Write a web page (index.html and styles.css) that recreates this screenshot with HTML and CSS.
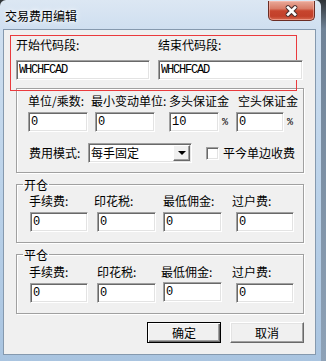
FILE: index.html
```html
<!DOCTYPE html>
<html lang="zh-CN">
<head>
    <meta charset="UTF-8">
    <title>交易费用编辑</title>
    <link rel="stylesheet" href="styles.css">
</head>
<body>

    <div class="window">
        <div class="titlebar">
            <span class="title">交易费用编辑</span>
            <button class="close-btn" aria-label="关闭">
                <svg width="13" height="12" viewBox="0 0 13 12">
                    <path d="M3 2.5 L10 9.5 M10 2.5 L3 9.5" stroke="#4a3030" stroke-width="4.6" stroke-linecap="round" fill="none"/>
                    <path d="M3 2.5 L10 9.5 M10 2.5 L3 9.5" stroke="#fff" stroke-width="2.6" stroke-linecap="square" fill="none"/>
                </svg>
            </button>
        </div>

        <div class="client">
            <div class="highlight"></div>

            <div class="code-row">
                <div class="code-col">
                    <span class="lbl">开始代码段:</span>
                    <input class="field code" type="text" value="WHCHFCAD">
                </div>
                <div class="code-col">
                    <span class="lbl">结束代码段:</span>
                    <input class="field code" type="text" value="WHCHFCAD">
                </div>
            </div>

            <div class="group params">
                <div class="param-labels">
                    <span>单位/乘数:</span>
                    <span>最小变动单位:</span>
                    <span>多头保证金</span>
                    <span>空头保证金</span>
                </div>
                <div class="param-inputs">
                    <input class="field w60" type="text" value="0">
                    <input class="field w60" type="text" value="0">
                    <input class="field w50" type="text" value="10">
                    <span class="pct">%</span>
                    <input class="field w48" type="text" value="0">
                    <span class="pct">%</span>
                </div>
                <div class="mode-row">
                    <span class="mode-lbl">费用模式:</span>
                    <div class="combo">
                        <span class="combo-text">每手固定</span>
                        <span class="combo-btn"><i class="arrow"></i></span>
                    </div>
                    <span class="check"></span>
                    <span class="check-lbl">平今单边收费</span>
                </div>
            </div>

            <fieldset class="group fee open">
                <legend>开仓</legend>
                <div class="fee-labels">
                    <span>手续费:</span>
                    <span>印花税:</span>
                    <span>最低佣金:</span>
                    <span>过户费:</span>
                </div>
                <div class="fee-inputs">
                    <input class="field" type="text" value="0">
                    <input class="field" type="text" value="0">
                    <input class="field" type="text" value="0">
                    <input class="field" type="text" value="0">
                </div>
            </fieldset>

            <fieldset class="group fee close">
                <legend>平仓</legend>
                <div class="fee-labels">
                    <span>手续费:</span>
                    <span>印花税:</span>
                    <span>最低佣金:</span>
                    <span>过户费:</span>
                </div>
                <div class="fee-inputs">
                    <input class="field" type="text" value="0">
                    <input class="field" type="text" value="0">
                    <input class="field lifted" type="text" value="0">
                    <input class="field" type="text" value="0">
                </div>
            </fieldset>

            <div class="actions">
                <button class="btn default">确定</button>
                <button class="btn">取消</button>
            </div>
        </div>
    </div>

</body>
</html>
```

FILE: styles.css
```css
/* Win7 style dialog */
body {
    margin: 0;
    width: 326px;
    height: 361px;
    overflow: hidden;
    background: linear-gradient(#2e3236 0%, #6f8296 8%, #8ea2b7 100%);
    font-family: "Noto Sans CJK SC", sans-serif;
    font-size: 12px;
    color: #000;
}

.window {
    width: 321px;
    height: 361px;
    box-sizing: border-box;
    padding: 0 5px 0 3px;
    background: linear-gradient(180deg, #dce7f3 0%, #cfdff0 8%, #bcd3ea 50%, #a9c4e0 100%);
    border-radius: 6px 6px 0 0;
}

/* Title bar */
.titlebar {
    display: flex;
    justify-content: space-between;
    align-items: flex-start;
    height: 29px;
    padding: 0 1px 0 2px;
}

.title {
    margin-top: 8px;
    line-height: 16px;
    text-shadow: 0 0 6px #fff, 0 0 3px #fff;
}

.close-btn {
    width: 47px;
    height: 20px;
    margin-top: 1px;
    padding: 0;
    display: flex;
    justify-content: center;
    align-items: center;
    border: 1px solid #6b2d24;
    border-top: none;
    border-radius: 0 0 5px 5px;
    background: linear-gradient(180deg, #e9aa9a 0%, #d97c68 40%, #c7452e 52%, #c2402a 80%, #d7694f 100%);
    box-shadow: inset 0 0 0 1px rgba(255, 200, 190, 0.5);
}

/* Client area */
.client {
    position: relative;
    width: 313px;
    height: 326px;
    box-sizing: border-box;
    border: 1px solid #8599ae;
    background: #f0f0f0;
    padding: 8px 11px 0 12px;
}

.highlight {
    position: absolute;
    left: 6px;
    top: 5px;
    width: 287px;
    height: 56px;
    box-sizing: border-box;
    border: 1px solid #ea3a3d;
}

.lbl {
    display: block;
    line-height: 14px;
    white-space: nowrap;
}

/* Sunken edit box */
.field {
    box-sizing: border-box;
    height: 20px;
    margin: 0;
    padding: 0 2px;
    border: 1px solid;
    border-color: #a0a0a0 #fff #fff #a0a0a0;
    box-shadow: inset 1px 1px #696969, inset -1px -1px #e3e3e3;
    background: #fff;
    font: 12px "Liberation Mono", monospace;
    color: #000;
    outline: none;
}

.code-row {
    position: relative;
    display: flex;
    gap: 8px;
}

.code-col:first-child {
    width: 134px;
}

.code-col:last-child {
    width: 145px;
}

.code-col .field {
    display: block;
    width: 100%;
    margin-top: 8px;
    letter-spacing: -1.2px;
}

/* Group boxes */
.group {
    border: 1px solid #a0a0a0;
    box-shadow: inset 1px 1px #fff, 1px 1px #fff;
}

.params {
    margin-top: 8px;
    padding: 5px 0 9px 11px;
}

.param-labels {
    display: flex;
    line-height: 14px;
    white-space: nowrap;
}

.param-labels span:nth-child(1) { width: 63px; }
.param-labels span:nth-child(2) { width: 78px; }
.param-labels span:nth-child(3) { width: 69px; }

.param-inputs {
    display: flex;
    align-items: center;
    margin-top: 4px;
}

.w60 { width: 60px; }
.w50 { width: 50px; }
.w48 { width: 48px; }

.param-inputs .field:nth-child(2) { margin-left: 7px; }
.param-inputs .field:nth-child(3) { margin-left: 14px; }
.param-inputs .field:nth-child(5) { margin-left: 7px; }

.pct {
    width: 7px;
    margin-left: 3px;
    font: 10px "Liberation Mono", monospace;
}

.mode-row {
    display: flex;
    align-items: center;
    margin-top: 11px;
    padding-left: 1px;
}

.mode-lbl {
    width: 59px;
    line-height: 14px;
}

.combo {
    display: flex;
    justify-content: space-between;
    align-items: center;
    width: 104px;
    height: 20px;
    box-sizing: border-box;
    padding: 1px;
    border: 1px solid;
    border-color: #a0a0a0 #fff #fff #a0a0a0;
    box-shadow: inset 1px 1px #696969, inset -1px -1px #e3e3e3;
    background: #fff;
}

.combo-text {
    padding-left: 1px;
    line-height: 16px;
}

.combo-btn {
    display: flex;
    justify-content: center;
    align-items: center;
    width: 17px;
    height: 16px;
    box-sizing: border-box;
    background: #f0f0f0;
    border: 1px solid;
    border-color: #fff #696969 #696969 #fff;
    box-shadow: inset -1px -1px #a0a0a0;
}

.arrow {
    width: 0;
    height: 0;
    border-left: 4px solid transparent;
    border-right: 4px solid transparent;
    border-top: 4px solid #000;
}

.check {
    width: 13px;
    height: 13px;
    box-sizing: border-box;
    margin-left: 14px;
    border: 1px solid;
    border-color: #a0a0a0 #fff #fff #a0a0a0;
    box-shadow: inset 1px 1px #696969, inset -1px -1px #e3e3e3;
    background: #fff;
}

.check-lbl {
    margin-left: 4px;
    line-height: 14px;
}

/* Fee groups */
.fee {
    margin: 4px 0 0;
    padding: 2px 0 10px 6px;
    min-width: 0;
}

.fee.close {
    padding-top: 3px;
}

.fee legend {
    padding: 0 1px;
    line-height: 15px;
}

.fee-labels {
    display: flex;
    padding-left: 6px;
    line-height: 14px;
    white-space: nowrap;
}

.fee-labels span:nth-child(1) { width: 65px; }
.fee-labels span:nth-child(2) { width: 69px; }
.fee-labels span:nth-child(3) { width: 69px; }

.close .fee-labels span:nth-child(1) { width: 68px; }
.close .fee-labels span:nth-child(2) { width: 64px; }
.close .fee-labels span:nth-child(3) { width: 71px; }

.fee-inputs {
    display: flex;
    align-items: flex-start;
    margin-top: 4px;
    padding-left: 7px;
}

.fee-inputs .field { width: 59px; }
.fee-inputs .field:nth-child(1) { width: 58px; }
.fee-inputs .field:nth-child(2) { margin-left: 9px; }
.fee-inputs .field:nth-child(3) { margin-left: 7px; }
.fee-inputs .field:nth-child(4) { margin-left: 14px; width: 58px; }

.fee-inputs .lifted {
    margin-top: -1px;
}

/* Buttons */
.actions {
    display: flex;
    justify-content: flex-end;
    gap: 9px;
    margin-top: 8px;
}

.btn {
    width: 74px;
    height: 21px;
    box-sizing: border-box;
    padding: 0;
    font-family: "Noto Sans CJK SC", sans-serif;
    font-size: 12px;
    color: #000;
    background: #f0f0f0;
    border: 1px solid;
    border-color: #fff #696969 #696969 #fff;
    box-shadow: inset -1px -1px #a0a0a0, inset 1px 1px #e3e3e3;
}

.btn.default {
    border-color: #000;
    box-shadow: inset 1px 1px #fff, inset -1px -1px #696969, inset -2px -2px #a0a0a0;
}
```
